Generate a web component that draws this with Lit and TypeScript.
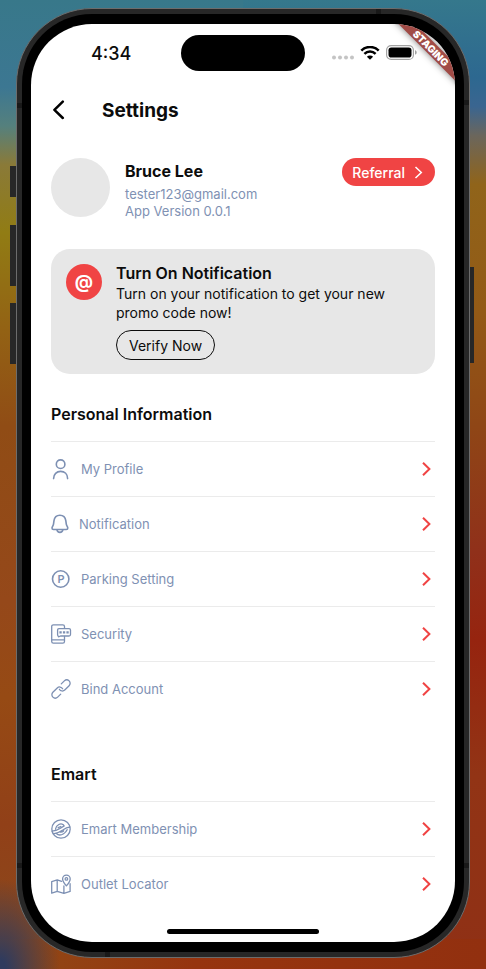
import { LitElement, html, css, svg, nothing } from "lit";
import { customElement, property } from "lit/decorators.js";

type IconName = "profile" | "bell" | "parking" | "security" | "link" | "emart" | "map";

interface MenuItem {
  label: string;
  icon: IconName;
}

interface MenuSection {
  title: string;
  items: MenuItem[];
}

const SECTIONS: MenuSection[] = [
  {
    title: "Personal Information",
    items: [
      { label: "My Profile", icon: "profile" },
      { label: "Notification", icon: "bell" },
      { label: "Parking Setting", icon: "parking" },
      { label: "Security", icon: "security" },
      { label: "Bind Account", icon: "link" },
    ],
  },
  {
    title: "Emart",
    items: [
      { label: "Emart Membership", icon: "emart" },
      { label: "Outlet Locator", icon: "map" },
    ],
  },
];

const chainHalf = "M6.2 13.4H1.9a3.4 3.4 0 0 1 0-6.8h6.2a3.400 3.400 0 0 1 3.200 4.400";

const ICONS: Record<IconName, unknown> = {
  profile: svg`<circle cx="9.6" cy="5.2" r="4.3"/><path d="M2.6 19.6c0-4.5 3-7.2 7-7.2s7 2.7 7 7.2"/>`,
  bell: svg`<path d="M8.9 1.2c-3.5 0-5.5 2.3-5.9 5.4l-.5 3.6c-.2 1.5-1.5 2.5-1.5 3.9 0 .9.6 1.4 1.5 1.4h12.8c.9 0 1.5-.5 1.5-1.4 0-1.4-1.3-2.4-1.5-3.9l-.5-3.6C14.4 3.5 12.4 1.2 8.9 1.2z"/><path d="M5.900 15.700c.3 1.700 1.500 2.700 3 2.700s2.700-1 3-2.700"/>`,
  parking: svg`<circle cx="9.700" cy="10" r="8.200"/><text class="letter" x="10" y="14">P</text>`,
  security: svg`<path d="M13.500 4.400V2.500A1.700 1.700 0 0 0 11.800.8H2.400A1.700 1.700 0 0 0 .7 2.500v15a1.700 1.700 0 0 0 1.700 1.700h9.400a1.700 1.700 0 0 0 1.700-1.700v-5.200M.7 15.800h12.800"/><path d="M8 4.600h10a1.500 1.500 0 0 1 1.500 1.500v4.400A1.500 1.500 0 0 1 18 12H9.500l-2 .8-.9-1.800V6.100A1.500 1.500 0 0 1 8 4.600z"/><path class="solid" d="M8.400 7.300h2.300v2.300H8.400zM11.900 7.300h2.300v2.300h-2.300zM15.400 7.300h2.300v2.300h-2.300z"/>`,
  link: svg`<g transform="rotate(-45 10 10)"><path d=${chainHalf}/><path d=${chainHalf} transform="rotate(180 10 10)"/></g>`,
  emart: svg`<circle cx="10" cy="10" r="9.200"/><path d="M1 12.200c3.200-.2 5.600-1.200 8-2.700l4.200-2.600c-.8-1.900-3.200-2.500-5.400-1.400-1.800.9-3 2.500-3.300 4.500M7.200 8.700l2.600-1.200M2.200 14.800c4-.4 7-2 9.600-3.800 2.200-1.600 4.500-2.800 7.200-3M5.400 14.500c1.700 1.700 4.800 1.700 7.200.2 1.800-1.100 2.800-2.400 3.500-4M9 13c1.300.3 2.700-.2 3.700-1"/>`,
  map: svg`<path d="M10.600 7.400 6.200 5.900.7 7.600v11.600l5.500-1.900 6.700 2 6.200-1.900V9.700M6.200 5.900v11.400M12.900 12v7.300"/><path d="M15.400 11.900c-2.300-2.700-3.800-4.700-3.800-7a3.800 3.800 0 0 1 7.600 0c0 2.300-1.500 4.300-3.800 7z"/><circle cx="15.400" cy="4.900" r="1.300"/>`,
};

@customElement("menu-row")
export class MenuRow extends LitElement {
  @property() label = "";
  @property() icon: IconName = "profile";

  static styles = css`
    :host {
      display: block;
      border-top: 1px solid #ebebeb;
    }
    .row {
      display: flex;
      align-items: center;
      gap: 10px;
      height: 54px;
      padding-right: 4px;
      color: #8091b3;
      font-size: 13px;
      text-decoration: none;
    }
    .icon {
      width: 20px;
      height: 20px;
      overflow: visible;
      fill: none;
      stroke: #7d90b3;
      stroke-width: 1.6;
      stroke-linecap: round;
      stroke-linejoin: round;
    }
    .bell {
      width: 18px;
    }
    .security,
    .link,
    .emart,
    .map {
      stroke-width: 1.3;
    }
    .letter {
      font: 600 11px Inter, sans-serif;
      text-anchor: middle;
      fill: #7d90b3;
      stroke: none;
    }
    .solid {
      fill: #7d90b3;
      stroke: none;
    }
    .label {
      flex: 1;
    }
    .chevron {
      width: 9px;
      height: 14px;
      fill: none;
      stroke: #f04444;
      stroke-width: 2;
    }
  `;

  render() {
    return html`<a class="row" href="#">
      <svg class="icon ${this.icon}" viewBox=${this.icon === "bell" ? "0 0 18 20" : "0 0 20 20"} aria-hidden="true">
        ${ICONS[this.icon] ?? nothing}
      </svg>
      <span class="label">${this.label}</span>
      <svg class="chevron" viewBox="0 0 9 14" aria-hidden="true"><path d="M1 .8 7.400 7 1 13.200" /></svg>
    </a>`;
  }
}

@customElement("app-root")
export class AppRoot extends LitElement {
  static styles = css`
    :host {
      display: block;
      font-family: Inter, "Noto Sans", sans-serif;
      color: #0c0c0c;
    }
    * {
      box-sizing: border-box;
    }
    h1,
    h2,
    h3,
    p,
    ul {
      margin: 0;
      padding: 0;
    }
    button {
      font: inherit;
      cursor: pointer;
    }
    .desktop {
      display: flex;
      min-height: 100vh;
      padding: 8px 16px 11px;
      background:
        radial-gradient(ellipse 60px 90px at 0 100%, #2f3b5e 10%, transparent),
        linear-gradient(90deg, #904a16, #96340f 40%, #92300f) bottom / 100% 30px no-repeat,
        linear-gradient(#38788a, #3c7792 9%, #55807d 13%, #8a7a38 17%, #917c14 24%, #936214 34%, #904c15 44%, #95481a 62%, #964a14 72%, #914018 85%, #8a4a1c) left / 50% 100% no-repeat,
        linear-gradient(#35788c, #2d6890 8%, #3a6590 11%, #6b665c 14%, #90641a 19%, #935a16 32%, #8f4616 44%, #90301a 57%, #96240f 66%, #923415 80%, #8f3015) right / 50% 100% no-repeat;
    }
    .phone {
      position: relative;
      flex: 1;
      display: flex;
      min-width: 0;
      padding: 5px;
      border: 1px solid #6c6c6c;
      border-radius: 76px;
      background: #272727;
    }
    .key {
      position: absolute;
      left: -7px;
      width: 6px;
      height: 61px;
      background: #272727;
    }
    .action {
      top: 157px;
      height: 31px;
    }
    .volume-up {
      top: 216px;
    }
    .volume-down {
      top: 294px;
    }
    .power {
      left: auto;
      right: -5px;
      top: 258px;
      width: 4px;
      height: 96px;
    }
    .band {
      position: absolute;
      width: 5px;
      height: 5px;
      background: #191919;
    }
    .band-tl { left: 0; top: 94px; }
    .band-tr { right: 0; top: 91px; }
    .band-bl { left: 0; bottom: 89px; }
    .band-br { right: 0; bottom: 89px; }
    .band-top { right: 88px; top: 0; }
    .band-bottom { left: 88px; bottom: 0; }
    .bezel {
      flex: 1;
      display: flex;
      min-width: 0;
      padding: 10px 9px;
      border-radius: 70px;
      background: #000;
    }
    .screen {
      position: relative;
      flex: 1;
      display: flex;
      flex-direction: column;
      min-width: 0;
      overflow: hidden;
      border-radius: 61px;
      background: #fff;
    }
    .ribbon {
      position: absolute;
      top: 18px;
      right: -31px;
      width: 110px;
      height: 12px;
      transform: rotate(45deg);
      background: #a14b46;
      box-shadow: 0 0 7px rgba(0, 0, 0, 0.5);
      color: #fff;
      font-size: 10px;
      font-weight: 900;
      line-height: 12px;
      text-align: center;
    }
    .status {
      display: grid;
      grid-template-columns: 1fr 124px 1fr;
      align-items: center;
      padding-top: 11px;
    }
    .time {
      padding-left: 60px;
      font-size: 18px;
      font-weight: 500;
    }
    .island {
      height: 36px;
      border-radius: 18px;
      background: #000;
    }
    .signals {
      display: flex;
      align-items: center;
      gap: 6px;
      padding-left: 27px;
    }
    .signals svg {
      flex: none;
    }
    .content {
      padding: 0 20px;
    }
    .header {
      display: flex;
      align-items: center;
      gap: 36px;
      height: 28px;
      margin-top: 25px;
    }
    .back {
      display: flex;
      padding: 0 0 0 1px;
      border: 0;
      background: none;
    }
    h1 {
      font-size: 19px;
      font-weight: 700;
    }
    .account {
      display: flex;
      align-items: flex-start;
      gap: 15px;
      margin-top: 34px;
    }
    .avatar {
      flex: none;
      width: 59px;
      height: 59px;
      border-radius: 50%;
      background: #e7e7e7;
    }
    .who {
      flex: 1;
      padding-top: 3px;
      color: #8091b3;
      font-size: 13px;
      line-height: 17px;
    }
    .who h2 {
      margin-bottom: 5px;
      color: #0c0c0c;
      font-size: 16px;
      line-height: 20px;
      font-weight: 700;
    }
    .referral {
      display: flex;
      align-items: center;
      gap: 9px;
      height: 28px;
      padding: 0 12px 0 10px;
      border: 0;
      border-radius: 14px;
      background: #f04444;
      color: #fff;
      font-size: 14px;
      font-weight: 500;
    }
    .promo {
      display: flex;
      gap: 14px;
      margin-top: 29px;
      padding: 15px 15px 14px;
      border-radius: 19px;
      background: #e7e7e7;
    }
    .at {
      flex: none;
      width: 36px;
      height: 36px;
      border-radius: 50%;
      background: #f04444;
      color: #fff;
      font-size: 18px;
      font-weight: 700;
      line-height: 36px;
      text-align: center;
    }
    h3 {
      font-size: 16px;
      line-height: 20px;
      font-weight: 600;
    }
    .promo h3 {
      line-height: 18px;
      margin-bottom: 2px;
    }
    .promo p {
      font-size: 14px;
      line-height: 19px;
    }
    .verify {
      height: 30px;
      margin-top: 8px;
      padding: 0 12px;
      border: 1px solid #0c0c0c;
      border-radius: 15px;
      background: none;
      color: inherit;
      font-size: 14px;
    }
    .section {
      margin-top: 30px;
    }
    .section + .section {
      margin-top: 48px;
    }
    .section ul {
      margin-top: 17px;
      list-style: none;
    }
    .home {
      width: 36%;
      height: 5px;
      margin: auto auto 8px;
      border-radius: 3px;
      background: #000;
    }
  `;

  render() {
    return html`
      <div class="desktop">
        <div class="phone">
          <span class="key action"></span>
          <span class="key volume-up"></span>
          <span class="key volume-down"></span>
          <span class="key power"></span>
          <span class="band band-tl"></span>
          <span class="band band-tr"></span>
          <span class="band band-bl"></span>
          <span class="band band-br"></span>
          <span class="band band-top"></span>
          <span class="band band-bottom"></span>
          <div class="bezel">
            <main class="screen">
              <div class="status">
                <span class="time">4:34</span>
                <span class="island"></span>
                <span class="signals">
                  <svg width="22" height="14" fill="#c4c4c4" aria-hidden="true">
                    <circle cx="2" cy="11.500" r="2" /><circle cx="8" cy="11.500" r="2" />
                    <circle cx="14" cy="11.500" r="2" /><circle cx="20" cy="11.500" r="2" />
                  </svg>
                  <svg width="20" height="15" viewBox="0 0 20 15" fill="none" stroke="#000" stroke-width="2.500" aria-hidden="true">
                    <path d="M1.300 4.600a12.300 12.300 0 0 1 17.400 0M4.400 7.900a8 8 0 0 1 11.200 0" />
                    <path d="M10 13.800 6.900 10.700a4.400 4.400 0 0 1 6.200 0z" fill="#000" stroke="none" />
                  </svg>
                  <svg width="31" height="16" viewBox="0 0 31 16" aria-hidden="true">
                    <rect x=".6" y=".6" width="26.800" height="13.800" rx="4.500" fill="none" stroke="#a3a3a3" stroke-width="1.200" />
                    <rect x="2.500" y="2.500" width="23" height="10" rx="2.800" />
                    <path d="M29 5.300c1.200.4 1.700 1.200 1.700 2.200s-.5 1.800-1.700 2.200z" fill="#a3a3a3" />
                  </svg>
                </span>
              </div>

              <div class="content">
                <header class="header">
                  <button class="back" aria-label="Back">
                    <svg width="14" height="20" viewBox="0 0 14 20" fill="none" stroke="#000" stroke-width="2.500" stroke-linecap="round" stroke-linejoin="round">
                      <path d="M10.800 1.600 2.400 9.800l8.400 8.200" />
                    </svg>
                  </button>
                  <h1>Settings</h1>
                </header>

                <section class="account">
                  <div class="avatar"></div>
                  <div class="who">
                    <h2>Bruce Lee</h2>
                    <p>tester123@gmail.com</p>
                    <p>App Version 0.0.1</p>
                  </div>
                  <button class="referral">
                    Referral
                    <svg width="9" height="13" viewBox="0 0 9 13" fill="none" stroke="#fff" stroke-width="1.500" aria-hidden="true">
                      <path d="m1.500 1 5.800 5.500-5.800 5.500" />
                    </svg>
                  </button>
                </section>

                <section class="promo">
                  <div class="at">@</div>
                  <div>
                    <h3>Turn On Notification</h3>
                    <p>Turn on your notification to get your new promo code now!</p>
                    <button class="verify">Verify Now</button>
                  </div>
                </section>

                ${SECTIONS.map(
                  (section) => html`<section class="section">
                    <h3>${section.title}</h3>
                    <ul>
                      ${section.items.map(
                        (item) => html`<li><menu-row .label=${item.label} .icon=${item.icon}></menu-row></li>`,
                      )}
                    </ul>
                  </section>`,
                )}
              </div>
              <div class="home"></div>
              <div class="ribbon">STAGING</div>
            </main>
          </div>
        </div>
      </div>
    `;
  }
}
